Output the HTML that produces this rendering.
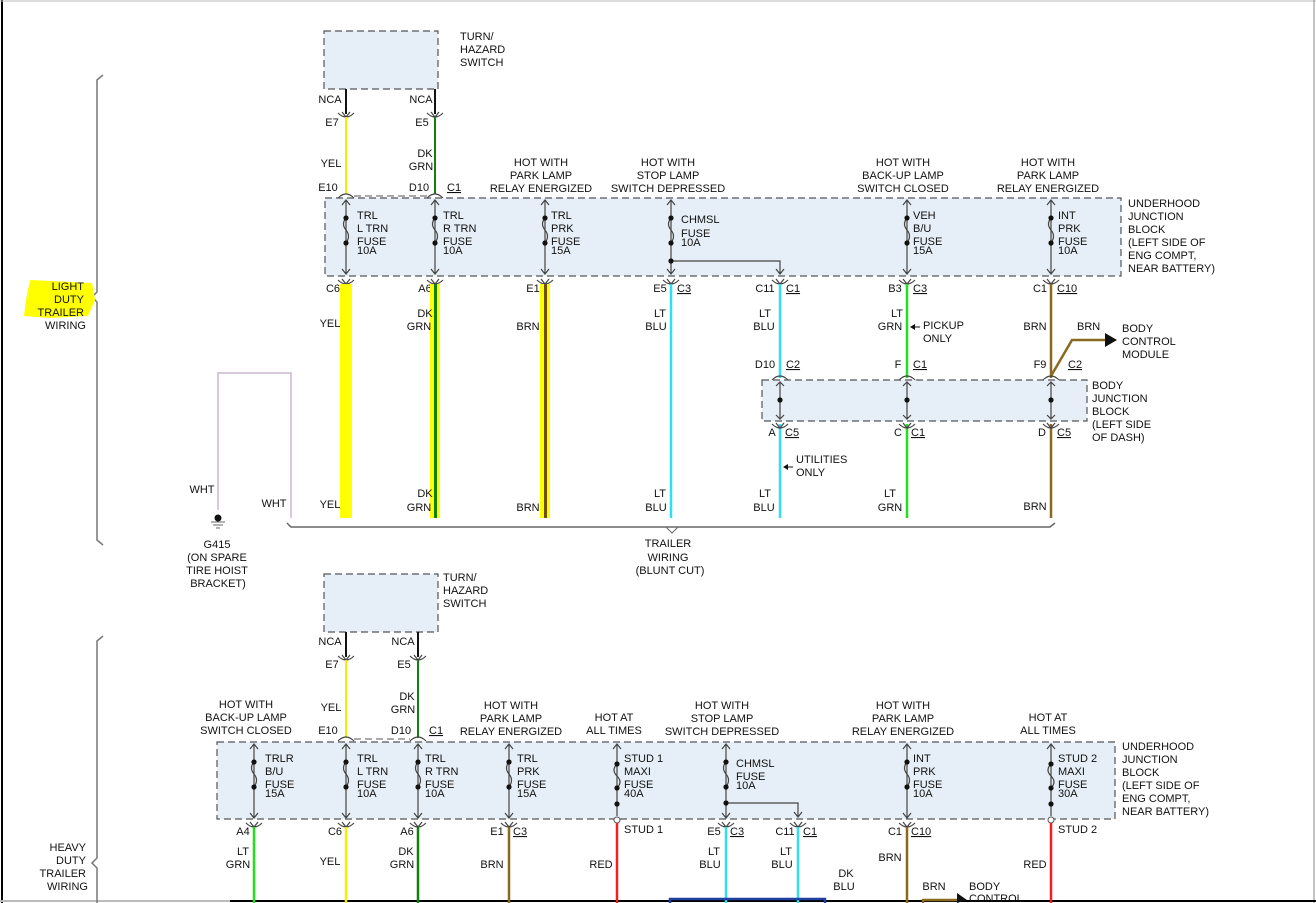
<!DOCTYPE html>
<html><head><meta charset="utf-8"><style>
html,body{margin:0;padding:0;background:#fff}
svg{display:block}
text{font-family:"Liberation Sans",Arial,sans-serif;font-size:11px;fill:#111}
.m{text-anchor:middle}.e{text-anchor:end}
.bx{fill:#e6eff7;stroke:#555;stroke-width:1.2;stroke-dasharray:7,4}
.f{stroke:#444;stroke-width:1.2;fill:none}
.u{text-decoration:underline}
</style></head><body>
<svg width="1316" height="903" viewBox="0 0 1316 903" xmlns="http://www.w3.org/2000/svg">
<defs>
<g id="fz"><path class="f" d="M0,2 V76 M-4,7 L0,2 L4,7 M-4,71 L0,76 L4,71 M0,20 q-5,6 0,12 q5,6 0,13"/><circle cx="0" cy="20" r="2.6" fill="#111"/><circle cx="0" cy="45" r="2.6" fill="#111"/></g>
<g id="fzs"><path class="f" d="M0,2 V76 M-4,7 L0,2 L4,7 M-4,71 L0,76 L4,71"/></g>
<g id="mx"><path class="f" d="M0,2 V74 M-4,7 L0,2 L4,7 M0,22 q-6,6 0,12 q6,6 0,12"/><circle cx="0" cy="22" r="2.6" fill="#111"/><circle cx="0" cy="46" r="2.6" fill="#111"/><circle cx="0" cy="62" r="2.6" fill="#111"/><circle cx="0" cy="78" r="3" fill="#fff" stroke="#555"/></g>
<g id="ct"><path class="f" d="M-8,3 q8,-8 16,0"/></g>
<g id="cb"><path class="f" d="M-8,0 q8,8 16,0 M-4,-1 L0,4 L4,-1"/></g>
</defs>
<rect x="0" y="0" width="1316" height="903" fill="#fff"/>
<line x1="2" y1="0" x2="2" y2="903" stroke="#000" stroke-width="2"/>
<line x1="0" y1="1" x2="1316" y2="1" stroke="#bbb"/>
<line x1="1314" y1="0" x2="1314" y2="903" stroke="#888"/>
<line x1="0" y1="901" x2="230" y2="901" stroke="#bbb" stroke-width="2"/>
<line x1="230" y1="901" x2="1316" y2="901" stroke="#000" stroke-width="2"/>

<!-- braces -->
<path d="M103,75 L97,80 V292 L92,297 L97,302 V540 L103,545" stroke="#777" stroke-width="1.5" fill="none"/>
<path d="M103,636 L97,641 V858 L92,863 L97,868 V903" stroke="#777" stroke-width="1.5" fill="none"/>
<path d="M30,280 L92,283 L95,300 L88,316 L50,318 L24,316 L26,300 Z" fill="#ffff00"/>
<text class="e" x="84" y="290">LIGHT</text><text class="e" x="84" y="303">DUTY</text><text class="e" x="84" y="316">TRAILER</text><text class="e" x="86" y="329">WIRING</text>
<text class="e" x="86" y="851">HEAVY</text><text class="e" x="86" y="864">DUTY</text><text class="e" x="86" y="877">TRAILER</text><text class="e" x="88" y="890">WIRING</text>

<!-- ===== TOP ===== -->
<rect class="bx" x="324" y="31" width="114" height="58"/>
<text x="460" y="40">TURN/</text><text x="460" y="53">HAZARD</text><text x="460" y="66">SWITCH</text>
<line x1="346" y1="89" x2="346" y2="114" stroke="#111" stroke-width="2"/>
<line x1="435" y1="89" x2="435" y2="114" stroke="#111" stroke-width="2"/>
<path class="f" d="M338,113 q8,8 16,0 M342,112 L346,117 L350,112 M427,113 q8,8 16,0 M431,112 L435,117 L439,112"/>
<text class="m" x="330" y="103">NCA</text><text class="m" x="421" y="103">NCA</text>
<text class="m" x="332" y="126">E7</text><text class="m" x="422" y="126">E5</text>
<line x1="346" y1="117" x2="346" y2="194" stroke="#f0f000" stroke-width="2"/>
<line x1="435" y1="117" x2="435" y2="194" stroke="#108010" stroke-width="2"/>
<text class="m" x="331" y="167">YEL</text><text class="m" x="425" y="157">DK</text><text class="m" x="421" y="170">GRN</text>
<text class="m" x="328" y="191">E10</text><text class="m" x="419" y="191">D10</text><text x="447" y="191" class="u">C1</text>
<line x1="354" y1="196" x2="427" y2="196" stroke="#555" stroke-dasharray="7,4"/>
<use href="#ct" x="346" y="195"/><use href="#ct" x="435" y="195"/>
<text class="m" x="541" y="166">HOT WITH</text><text class="m" x="541" y="179">PARK LAMP</text><text class="m" x="541" y="192">RELAY ENERGIZED</text>
<text class="m" x="668" y="166">HOT WITH</text><text class="m" x="668" y="179">STOP LAMP</text><text class="m" x="668" y="192">SWITCH DEPRESSED</text>
<text class="m" x="903" y="166">HOT WITH</text><text class="m" x="903" y="179">BACK-UP LAMP</text><text class="m" x="903" y="192">SWITCH CLOSED</text>
<text class="m" x="1048" y="166">HOT WITH</text><text class="m" x="1048" y="179">PARK LAMP</text><text class="m" x="1048" y="192">RELAY ENERGIZED</text>
<rect class="bx" x="325" y="198" width="796" height="78"/>
<text x="1128" y="207">UNDERHOOD</text><text x="1128" y="220">JUNCTION</text><text x="1128" y="233">BLOCK</text><text x="1128" y="246">(LEFT SIDE OF</text><text x="1128" y="259">ENG COMPT,</text><text x="1128" y="272">NEAR BATTERY)</text>
<use href="#fz" x="346" y="198"/><use href="#fz" x="435" y="198"/><use href="#fz" x="545" y="198"/><use href="#fz" x="671" y="198"/><use href="#fz" x="907" y="198"/><use href="#fz" x="1051" y="198"/>
<text x="357" y="219">TRL</text><text x="357" y="232">L TRN</text><text x="357" y="245">FUSE</text><text x="357" y="254">10A</text>
<text x="443" y="219">TRL</text><text x="443" y="232">R TRN</text><text x="443" y="245">FUSE</text><text x="443" y="254">10A</text>
<text x="551" y="219">TRL</text><text x="551" y="232">PRK</text><text x="551" y="245">FUSE</text><text x="551" y="254">15A</text>
<text x="681" y="223">CHMSL</text><text x="681" y="237">FUSE</text><text x="681" y="246">10A</text>
<text x="913" y="219">VEH</text><text x="913" y="232">B/U</text><text x="913" y="245">FUSE</text><text x="913" y="254">15A</text>
<text x="1058" y="219">INT</text><text x="1058" y="232">PRK</text><text x="1058" y="245">FUSE</text><text x="1058" y="254">10A</text>
<path class="f" d="M671,261 H780 V274 M776,269 L780,274 L784,269"/><circle cx="671" cy="261" r="2.6" fill="#111"/>
<use href="#cb" x="346" y="280"/><use href="#cb" x="435" y="280"/><use href="#cb" x="545" y="280"/><use href="#cb" x="671" y="280"/><use href="#cb" x="780" y="280"/><use href="#cb" x="907" y="280"/><use href="#cb" x="1051" y="280"/>
<text class="m" x="333" y="292">C6</text><text class="m" x="425" y="292">A6</text><text class="m" x="533" y="292">E1</text>
<text class="m" x="660" y="292">E5</text><text x="677" y="292" class="u">C3</text>
<text class="m" x="765" y="292">C11</text><text x="786" y="292" class="u">C1</text>
<text class="m" x="895" y="292">B3</text><text x="913" y="292" class="u">C3</text>
<text class="m" x="1040" y="292">C1</text><text x="1057" y="292" class="u">C10</text>
<!-- wires -->
<rect x="340" y="284" width="12" height="234" fill="#ffff00"/>
<rect x="430" y="284" width="10" height="234" fill="#ffff00"/><rect x="434" y="284" width="3" height="234" fill="#108010"/>
<rect x="540" y="284" width="10" height="234" fill="#ffff00"/><rect x="544" y="284" width="3" height="234" fill="#705010"/>
<line x1="671" y1="284" x2="671" y2="518" stroke="#30e0f0" stroke-width="2.5"/>
<line x1="780" y1="284" x2="780" y2="378" stroke="#30e0f0" stroke-width="2.5"/><line x1="780" y1="424" x2="780" y2="518" stroke="#30e0f0" stroke-width="2.5"/>
<line x1="907" y1="284" x2="907" y2="378" stroke="#20e020" stroke-width="2.5"/><line x1="907" y1="424" x2="907" y2="518" stroke="#20e020" stroke-width="2.5"/>
<line x1="1051" y1="284" x2="1051" y2="378" stroke="#8a6a20" stroke-width="2.5"/><line x1="1051" y1="424" x2="1051" y2="518" stroke="#8a6a20" stroke-width="2.5"/>
<text class="m" x="330" y="327">YEL</text><text class="m" x="425" y="317">DK</text><text class="m" x="419" y="330">GRN</text><text class="m" x="528" y="330">BRN</text>
<text class="m" x="660" y="317">LT</text><text class="m" x="656" y="330">BLU</text><text class="m" x="765" y="317">LT</text><text class="m" x="764" y="330">BLU</text>
<text class="m" x="897" y="317">LT</text><text class="m" x="890" y="330">GRN</text><text class="m" x="1035" y="330">BRN</text>
<path d="M911,327 H920" stroke="#111"/><path d="M910,327 l5,-3 v6z" fill="#111"/>
<text x="923" y="329">PICKUP</text><text x="923" y="342">ONLY</text>
<path d="M1051,376 L1072,340 H1106" stroke="#8a6a20" stroke-width="2.5" fill="none"/><path d="M1105,333 L1117,340 L1105,347Z" fill="#111"/>
<text x="1077" y="330">BRN</text><text x="1122" y="332">BODY</text><text x="1122" y="345">CONTROL</text><text x="1122" y="358">MODULE</text>
<text class="m" x="765" y="368">D10</text><text x="786" y="368" class="u">C2</text>
<text class="m" x="898" y="368">F</text><text x="913" y="368" class="u">C1</text>
<text class="m" x="1040" y="368">F9</text><text x="1068" y="368" class="u">C2</text>
<use href="#ct" x="780" y="377"/><use href="#ct" x="907" y="377"/><use href="#ct" x="1051" y="377"/>
<rect class="bx" x="762" y="380" width="325" height="41"/>
<g class="f"><path d="M780,382 V419 M776,386 L780,382 L784,386 M776,415 L780,419 L784,415"/><path d="M907,382 V419 M903,386 L907,382 L911,386 M903,415 L907,419 L911,415"/><path d="M1051,382 V419 M1047,386 L1051,382 L1055,386 M1047,415 L1051,419 L1055,415"/></g>
<circle cx="780" cy="400" r="2.6" fill="#111"/><circle cx="907" cy="400" r="2.6" fill="#111"/><circle cx="1051" cy="400" r="2.6" fill="#111"/>
<text x="1092" y="389">BODY</text><text x="1092" y="402">JUNCTION</text><text x="1092" y="415">BLOCK</text><text x="1092" y="428">(LEFT SIDE</text><text x="1092" y="441">OF DASH)</text>
<use href="#cb" x="780" y="424"/><use href="#cb" x="907" y="424"/><use href="#cb" x="1051" y="424"/>
<text class="m" x="772" y="436">A</text><text x="785" y="436" class="u">C5</text>
<text class="m" x="898" y="436">C</text><text x="911" y="436" class="u">C1</text>
<text class="m" x="1042" y="436">D</text><text x="1057" y="436" class="u">C5</text>
<path d="M784,467 H793" stroke="#111"/><path d="M783,467 l5,-3 v6z" fill="#111"/>
<text x="796" y="463">UTILITIES</text><text x="796" y="476">ONLY</text>
<text class="m" x="330" y="508">YEL</text><text class="m" x="425" y="497">DK</text><text class="m" x="419" y="511">GRN</text><text class="m" x="528" y="511">BRN</text>
<text class="m" x="660" y="497">LT</text><text class="m" x="656" y="511">BLU</text><text class="m" x="765" y="497">LT</text><text class="m" x="764" y="511">BLU</text>
<text class="m" x="890" y="497">LT</text><text class="m" x="890" y="511">GRN</text><text class="m" x="1035" y="510">BRN</text>
<path d="M287,523 L291,527 H1050 L1055,523" stroke="#666" stroke-width="1.5" fill="none"/>
<path d="M666,527 L672,533 L678,527" stroke="#666" fill="none"/>
<text class="m" x="668" y="547">TRAILER</text><text class="m" x="668" y="561">WIRING</text><text class="m" x="670" y="574">(BLUNT CUT)</text>
<path d="M218,510 V373 H291 V518" stroke="#d8cad8" stroke-width="2" fill="none"/>
<text class="m" x="202" y="493">WHT</text><text class="m" x="274" y="507">WHT</text>
<circle cx="218" cy="518" r="3.5" fill="#111"/><path d="M211,522 H225 M213,525 H223 M216,528 H220" stroke="#666"/>
<text class="m" x="217" y="548">G415</text><text class="m" x="217" y="561">(ON SPARE</text><text class="m" x="217" y="574">TIRE HOIST</text><text class="m" x="218" y="587">BRACKET)</text>

<!-- ===== BOTTOM ===== -->
<rect class="bx" x="324" y="574" width="114" height="58"/>
<text x="443" y="581">TURN/</text><text x="443" y="594">HAZARD</text><text x="443" y="607">SWITCH</text>
<line x1="346" y1="632" x2="346" y2="657" stroke="#111" stroke-width="2"/>
<line x1="418" y1="632" x2="418" y2="657" stroke="#111" stroke-width="2"/>
<path class="f" d="M338,656 q8,8 16,0 M342,655 L346,660 L350,655 M410,656 q8,8 16,0 M414,655 L418,660 L422,655"/>
<text class="m" x="330" y="645">NCA</text><text class="m" x="403" y="645">NCA</text>
<text class="m" x="332" y="668">E7</text><text class="m" x="404" y="668">E5</text>
<line x1="346" y1="660" x2="346" y2="738" stroke="#f0f000" stroke-width="2"/>
<line x1="418" y1="660" x2="418" y2="738" stroke="#108010" stroke-width="2"/>
<text class="m" x="331" y="711">YEL</text><text class="m" x="407" y="700">DK</text><text class="m" x="403" y="713">GRN</text>
<text class="m" x="328" y="734">E10</text><text class="m" x="401" y="734">D10</text><text x="429" y="734" class="u">C1</text>
<line x1="354" y1="739" x2="410" y2="739" stroke="#555" stroke-dasharray="7,4"/>
<use href="#ct" x="346" y="738"/><use href="#ct" x="418" y="738"/>
<text class="m" x="246" y="708">HOT WITH</text><text class="m" x="246" y="721">BACK-UP LAMP</text><text class="m" x="246" y="734">SWITCH CLOSED</text>
<text class="m" x="511" y="709">HOT WITH</text><text class="m" x="511" y="722">PARK LAMP</text><text class="m" x="511" y="735">RELAY ENERGIZED</text>
<text class="m" x="614" y="721">HOT AT</text><text class="m" x="614" y="734">ALL TIMES</text>
<text class="m" x="722" y="709">HOT WITH</text><text class="m" x="722" y="722">STOP LAMP</text><text class="m" x="722" y="735">SWITCH DEPRESSED</text>
<text class="m" x="903" y="709">HOT WITH</text><text class="m" x="903" y="722">PARK LAMP</text><text class="m" x="903" y="735">RELAY ENERGIZED</text>
<text class="m" x="1048" y="721">HOT AT</text><text class="m" x="1048" y="734">ALL TIMES</text>
<rect class="bx" x="217" y="742" width="898" height="77"/>
<text x="1122" y="750">UNDERHOOD</text><text x="1122" y="763">JUNCTION</text><text x="1122" y="776">BLOCK</text><text x="1122" y="789">(LEFT SIDE OF</text><text x="1122" y="802">ENG COMPT,</text><text x="1122" y="815">NEAR BATTERY)</text>
<use href="#fz" x="254" y="742"/><use href="#fz" x="346" y="742"/><use href="#fz" x="418" y="742"/><use href="#fz" x="509" y="742"/><use href="#fz" x="726" y="742"/><use href="#fz" x="907" y="742"/>
<use href="#mx" x="617" y="742"/><use href="#mx" x="1051" y="742"/>
<text x="265" y="762">TRLR</text><text x="265" y="775">B/U</text><text x="265" y="788">FUSE</text><text x="265" y="797">15A</text>
<text x="357" y="762">TRL</text><text x="357" y="775">L TRN</text><text x="357" y="788">FUSE</text><text x="357" y="797">10A</text>
<text x="425" y="762">TRL</text><text x="425" y="775">R TRN</text><text x="425" y="788">FUSE</text><text x="425" y="797">10A</text>
<text x="517" y="762">TRL</text><text x="517" y="775">PRK</text><text x="517" y="788">FUSE</text><text x="517" y="797">15A</text>
<text x="624" y="762">STUD 1</text><text x="624" y="775">MAXI</text><text x="624" y="788">FUSE</text><text x="624" y="797">40A</text>
<text x="736" y="767">CHMSL</text><text x="736" y="780">FUSE</text><text x="736" y="789">10A</text>
<text x="913" y="762">INT</text><text x="913" y="775">PRK</text><text x="913" y="788">FUSE</text><text x="913" y="797">10A</text>
<text x="1058" y="762">STUD 2</text><text x="1058" y="775">MAXI</text><text x="1058" y="788">FUSE</text><text x="1058" y="797">30A</text>
<path class="f" d="M726,803 H798 V817 M794,812 L798,817 L802,812"/><circle cx="726" cy="803" r="2.6" fill="#111"/>
<use href="#cb" x="254" y="823"/><use href="#cb" x="346" y="823"/><use href="#cb" x="418" y="823"/><use href="#cb" x="509" y="823"/><use href="#cb" x="726" y="823"/><use href="#cb" x="798" y="823"/><use href="#cb" x="907" y="823"/>
<text class="m" x="243" y="835">A4</text><text class="m" x="335" y="835">C6</text><text class="m" x="407" y="835">A6</text>
<text class="m" x="497" y="835">E1</text><text x="513" y="835" class="u">C3</text>
<text x="624" y="833">STUD 1</text>
<text class="m" x="714" y="835">E5</text><text x="730" y="835" class="u">C3</text>
<text class="m" x="785" y="835">C11</text><text x="803" y="835" class="u">C1</text>
<text class="m" x="895" y="835">C1</text><text x="911" y="835" class="u">C10</text>
<text x="1058" y="833">STUD 2</text>
<line x1="254" y1="827" x2="254" y2="903" stroke="#20e020" stroke-width="2.5"/>
<line x1="346" y1="827" x2="346" y2="903" stroke="#f0f000" stroke-width="2.5"/>
<line x1="418" y1="827" x2="418" y2="903" stroke="#108010" stroke-width="2.5"/>
<line x1="509" y1="827" x2="509" y2="903" stroke="#8a6a20" stroke-width="2.5"/>
<line x1="617" y1="823" x2="617" y2="903" stroke="#f02020" stroke-width="2.5"/>
<line x1="726" y1="827" x2="726" y2="903" stroke="#30e0f0" stroke-width="2.5"/>
<line x1="798" y1="827" x2="798" y2="903" stroke="#30e0f0" stroke-width="2.5"/>
<line x1="907" y1="827" x2="907" y2="903" stroke="#8a6a20" stroke-width="2.5"/>
<line x1="1051" y1="823" x2="1051" y2="903" stroke="#f02020" stroke-width="2.5"/>
<text class="m" x="243" y="855">LT</text><text class="m" x="238" y="868">GRN</text><text class="m" x="330" y="865">YEL</text>
<text class="m" x="406" y="855">DK</text><text class="m" x="402" y="868">GRN</text><text class="m" x="492" y="868">BRN</text><text class="m" x="601" y="868">RED</text>
<text class="m" x="714" y="855">LT</text><text class="m" x="710" y="868">BLU</text><text class="m" x="786" y="855">LT</text><text class="m" x="782" y="868">BLU</text>
<text class="m" x="846" y="877">DK</text><text class="m" x="844" y="890">BLU</text><text class="m" x="890" y="861">BRN</text><text class="m" x="1035" y="868">RED</text>
<path d="M670,903 V899 H825 V903" stroke="#2040a0" stroke-width="2.5" fill="none"/>
<path d="M923,903 V900 H960" stroke="#8a6a20" stroke-width="2.5" fill="none"/><path d="M957,893 L967,900 L957,903Z" fill="#111"/>
<text class="m" x="934" y="890">BRN</text><text x="969" y="890">BODY</text><text x="969" y="902">CONTROL</text>
</svg>
</body></html>
